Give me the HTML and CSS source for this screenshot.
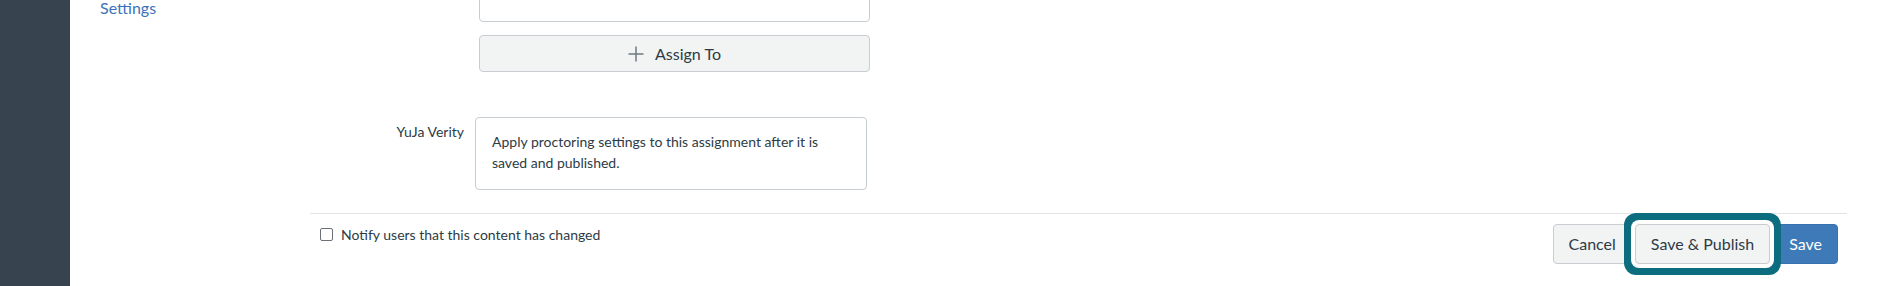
FILE: index.html
```html
<!DOCTYPE html>
<html lang="en">
<head>
<meta charset="utf-8">
<title>Assignment settings</title>
<link rel="stylesheet" href="styles.css">
</head>
<body>
<div class="app">
  <aside class="global-nav"></aside>
  <div class="main">
    <nav class="course-nav">
      <a class="nav-link" href="#">Settings</a>
    </nav>
    <div class="content">
      <div class="assign">
        <div class="assign-input"></div>
        <button class="assign-btn" type="button">
          <svg class="plus" width="16" height="16" viewBox="0 0 16 16" aria-hidden="true">
            <path d="M8 0.5V15.5M0.5 8H15.5" stroke="#6f7a83" stroke-width="1.5" fill="none"/>
          </svg>
          <span>Assign To</span>
        </button>
      </div>
      <div class="field-row">
        <div class="field-label">YuJa Verity</div>
        <div class="field-box">Apply proctoring settings to this assignment after it is<br>saved and published.</div>
      </div>
      <div class="form-actions">
        <label class="notify"><input class="check" type="checkbox"><span>Notify users that this content has changed</span></label>
        <div class="buttons">
          <button class="btn" type="button">Cancel</button>
          <button class="btn btn-focus" type="button">Save &amp; Publish</button>
          <button class="btn btn-primary" type="button">Save</button>
        </div>
      </div>
    </div>
  </div>
</div>
</body>
</html>
```

FILE: styles.css
```css
html, body {
  margin: 0;
  padding: 0;
  background: #ffffff;
}
body {
  font-family: Lato, "Open Sans", "Liberation Sans", sans-serif;
  color: #2d3b45;
  overflow: hidden;
}
.app {
  display: flex;
  height: 286px;
}
.global-nav {
  width: 70px;
  flex: none;
  background: #37444f;
}
.main {
  display: flex;
  flex: 1;
}
.course-nav {
  width: 210px;
  flex: none;
  padding-left: 30px;
}
.nav-link {
  display: block;
  font-size: 16px;
  line-height: 16px;
  color: #3b72b8;
  text-decoration: none;
}
.content {
  width: 1537px;
  flex: none;
  display: flex;
  flex-direction: column;
}
.assign {
  margin-left: 169px;
  width: 391px;
  margin-top: -16px;
  display: flex;
  flex-direction: column;
}
.assign-input {
  height: 38px;
  box-sizing: border-box;
  border: 1px solid #c7cdd1;
  border-radius: 4px;
  background: #fff;
}
.assign-btn {
  margin-top: 13px;
  height: 37px;
  box-sizing: border-box;
  border: 1px solid #c7cdd1;
  border-radius: 4px;
  background: #f2f3f3;
  display: flex;
  align-items: center;
  justify-content: center;
  gap: 11px;
  font-family: inherit;
  font-size: 16px;
  color: #2d3b45;
  padding: 0;
}
.field-row {
  margin-top: 45px;
  display: flex;
}
.field-label {
  width: 165px;
  box-sizing: border-box;
  padding-right: 11px;
  padding-top: 4px;
  text-align: right;
  font-size: 14px;
  line-height: 21px;
}
.field-box {
  width: 392px;
  height: 73px;
  box-sizing: border-box;
  border: 1px solid #c7cdd1;
  border-radius: 4px;
  padding: 13px 16px 0 16px;
  font-size: 14px;
  line-height: 21px;
}
.form-actions {
  margin-top: 23px;
  border-top: 1px solid #e2e4e6;
  padding: 10px 9px 0 10px;
  display: flex;
  justify-content: space-between;
  align-items: flex-start;
}
.notify {
  display: flex;
  align-items: flex-start;
  gap: 8px;
  font-size: 14px;
  line-height: 21px;
}
.check {
  appearance: none;
  -webkit-appearance: none;
  margin: 4px 0 0 0;
  width: 13px;
  height: 13px;
  box-sizing: border-box;
  border: 1.3px solid #6b7177;
  border-radius: 2px;
  background: #fff;
}
.buttons {
  display: flex;
  gap: 3px;
}
.btn {
  height: 40px;
  box-sizing: border-box;
  padding: 0 15px;
  border: 1px solid #c7cdd1;
  border-radius: 4px;
  background: #f2f3f3;
  color: #2d3b45;
  font-family: inherit;
  font-size: 16px;
  line-height: 22px;
}
.btn-focus {
  position: relative;
  z-index: 1;
  box-shadow: 0 0 0 4px #ffffff, 0 0 0 11px #0c6d7e;
}
.btn-primary {
  background: #3e7ab8;
  border-color: #3a72ad;
  color: #ffffff;
}
```
